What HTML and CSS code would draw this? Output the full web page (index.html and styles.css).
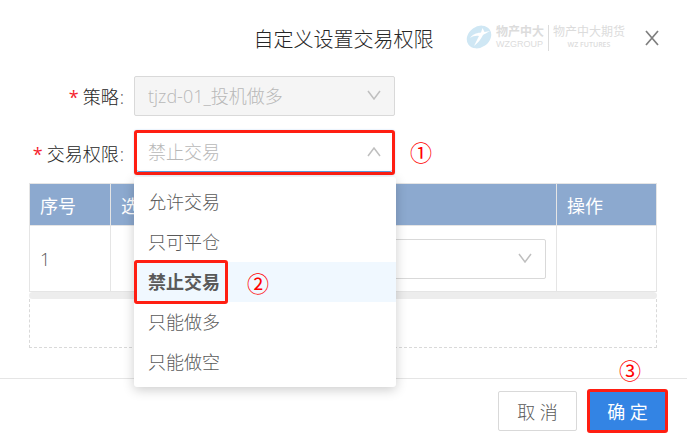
FILE: index.html
```
<!DOCTYPE html>
<html lang="zh-CN">
<head>
    <meta charset="UTF-8">
    <title>自定义设置交易权限</title>
    <link rel="stylesheet" href="styles.css">
</head>
<body>
<div class="modal">
    <!-- 标题 -->
    <div class="header">
        <h3>自定义设置交易权限</h3>
        <div class="header-right">
            <div class="logo">
                <svg width="26" height="26" viewBox="0 0 26 26">
                    <ellipse cx="13" cy="12" rx="13" ry="10.5" transform="rotate(-35 13 12)" fill="#cfe7f4"/>
                    <path d="M4 13C8 8 12 8 15 7.5L16.500 3L18.500 7L24 6C21 8 18 9 17 10C15 14 12 18 8 21C10 17 12 13 13 11C10 10.500 7 11 4 13Z" fill="#fff"/>
                </svg>
                <div class="group">
                    <b>物产中大</b>
                    <span>WZGROUP</span>
                </div>
                <div class="futures">
                    <b>物产中大期货</b>
                    <span>WZ FUTURES</span>
                </div>
            </div>
            <button type="button" class="close" aria-label="关闭">
                <svg width="14" height="16" viewBox="0 0 14 16">
                    <path d="M1 1L13 15M13 1L1 15" stroke="#7f7f7f" stroke-width="1.7" fill="none"/>
                </svg>
            </button>
        </div>
    </div>
    <!-- 表单 -->
    <form class="form">
        <div class="row">
            <label for="strategy"><i>*</i>策略<span>:</span></label>
            <div class="control">
                <select id="strategy" disabled>
                    <option>tjzd-01_投机做多</option>
                </select>
                <svg class="arrow" width="14" height="10" viewBox="0 0 14 10"><path d="M1 1L7 9L13 1"/></svg>
            </div>
        </div>
        <div class="row">
            <label for="auth"><i>*</i>交易权限<span>:</span></label>
            <div class="control marked">
                <select id="auth">
                    <option>禁止交易</option>
                </select>
                <svg class="arrow" width="14" height="10" viewBox="0 0 14 10"><path d="M1 9L7 1L13 9"/></svg>
                <span class="num num-1">①</span>
                <!-- 下拉菜单 -->
                <ul class="menu">
                    <li>允许交易</li>
                    <li>只可平仓</li>
                    <li class="active"><span class="box">禁止交易</span><span class="num num-2">②</span></li>
                    <li>只能做多</li>
                    <li>只能做空</li>
                </ul>
            </div>
        </div>
        <div class="list">
            <table>
                <colgroup>
                    <col class="col-no">
                    <col class="col-check">
                    <col>
                    <col class="col-do">
                </colgroup>
                <thead>
                <tr>
                    <th>序号</th>
                    <th>选</th>
                    <th></th>
                    <th>操作</th>
                </tr>
                </thead>
                <tbody>
                <tr>
                    <td>1</td>
                    <td></td>
                    <td>
                        <div class="control">
                            <select aria-label="选择"></select>
                            <svg class="arrow" width="14" height="10" viewBox="0 0 14 10"><path d="M1 1L7 9L13 1"/></svg>
                        </div>
                    </td>
                    <td></td>
                </tr>
                </tbody>
            </table>
            <div class="scroll"></div>
            <div class="add"></div>
        </div>
    </form>
    <!-- 按钮 -->
    <div class="footer">
        <button type="button" class="cancel">取 消</button>
        <button type="button" class="ok">确 定<span class="num num-3">③</span></button>
    </div>
</div>
</body>
</html>
```
FILE: styles.css
```
* {
    box-sizing: border-box;
}
body {
    margin: 0;
    background-color: #FFF;
    color: #595959;
    font-family: "Open Sans", "Noto Sans CJK SC", sans-serif;
    font-size: 18px;
    font-weight: 300;
}
.modal {
    margin-right: 3px;
}

/* 标题 */
.header {
    display: grid;
    grid-template-columns: 1fr auto 1fr;
    align-items: center;
    height: 76px;
    padding: 0 28px;
}
.header h3 {
    grid-column: 2;
    margin: 0;
    color: #262626;
    font-size: 20px;
    font-weight: 300;
}
.header-right {
    display: flex;
    justify-content: flex-end;
    align-items: center;
    gap: 20px;
}
.logo {
    display: flex;
    align-items: center;
    gap: 4px;
    color: #DCDCDC;
    white-space: nowrap;
}
.group,
.futures {
    display: flex;
    flex-direction: column;
    line-height: 13px;
}
.group b {
    font-size: 12px;
    font-weight: 700;
}
.group span {
    font-family: "Liberation Sans", sans-serif;
    font-size: 9px;
    font-weight: 400;
}
.futures {
    padding-left: 4px;
    border-left: 1px solid #DCDCDC;
    text-align: center;
}
.futures b {
    font-size: 12px;
    font-weight: 400;
}
.futures span {
    font-size: 7px;
    font-weight: 600;
}
.close {
    display: block;
    padding: 0;
    border: none;
    background: none;
}
.close svg {
    display: block;
}

/* 表单 */
.form {
    padding: 0 30px 30px 29px;
}
.row {
    display: flex;
    align-items: center;
    margin-bottom: 14px;
}
.row label {
    width: 105px;
    padding-right: 10px;
    color: #262626;
    text-align: right;
    white-space: nowrap;
}
.row label i {
    margin-right: 4px;
    color: #F5222D;
    font-style: normal;
    font-weight: 400;
}
.row label span {
    margin-left: 1px;
    color: #595959;
}
.control {
    position: relative;
}
.row .control {
    width: 261px;
}
.control select {
    display: block;
    width: 100%;
    height: 40px;
    padding: 0 13px;
    border: 1px solid #D9D9D9;
    border-radius: 2px;
    background-color: #FFF;
    color: #B8B8B8;
    font: inherit;
    appearance: none;
    opacity: 1;
}
.control select:disabled {
    background-color: #F5F5F5;
}
.arrow {
    position: absolute;
    top: 14px;
    right: 14px;
    fill: none;
    stroke: #BFBFBF;
    stroke-width: 1.5;
}
.row .marked {
    border: 3px solid #FF1E12;
    border-radius: 3px;
    box-shadow: 0 0 2px #BCD8F5;
}
.marked select {
    height: 39px;
    padding: 0 11px;
    border: none;
    border-bottom: 1px solid #5B9BDC;
}
.marked .arrow {
    right: 11px;
}

/* 序号 */
.num {
    position: absolute;
    color: #FF0000;
    font-family: "Noto Sans CJK SC", sans-serif;
    font-size: 22px;
    font-weight: 400;
    line-height: 24px;
}
.num-1 {
    top: 6px;
    left: 273px;
}
.num-2 {
    top: 8px;
    left: 113px;
}
.num-3 {
    top: -35px;
    left: 29px;
}

/* 下拉菜单 */
.menu {
    position: absolute;
    z-index: 1;
    top: 44px;
    left: -3px;
    width: 262px;
    margin: 0;
    padding: 5px 0;
    border-radius: 3px;
    background-color: #FFF;
    box-shadow: 0 3px 12px rgba(0, 0, 0, 0.2);
    list-style: none;
}
.menu li {
    position: relative;
    height: 40px;
    padding-left: 14px;
    line-height: 40px;
}
.menu .active {
    padding-left: 0;
    background-color: #F0F8FF;
    font-weight: 700;
}
.menu .box {
    position: absolute;
    top: -2px;
    left: 0;
    width: 94px;
    padding-left: 11px;
    border: 3px solid #FF1E12;
    border-radius: 3px;
    line-height: 38px;
}

/* 表格 */
.list {
    margin-top: -6px;
}
table {
    width: 100%;
    border-collapse: collapse;
    table-layout: fixed;
}
.col-no {
    width: 81px;
}
.col-check {
    width: 120px;
}
.col-do {
    width: 100px;
}
th,
td {
    padding: 0 10px;
    border: 1px solid #E5E5E5;
    text-align: left;
}
th {
    height: 42px;
    background-color: #8CA9CF;
    color: #FFF;
    font-weight: 400;
}
td {
    height: 66px;
}
.scroll {
    height: 7px;
    border-radius: 4px;
    background-color: #EDEDED;
}
.add {
    height: 49px;
    border: 1px dashed #D9D9D9;
    border-top: none;
}

/* 按钮 */
.footer {
    display: flex;
    justify-content: flex-end;
    align-items: center;
    gap: 10px;
    padding: 10px 19px;
    border-top: 1px solid #E5E5E5;
}
.footer button {
    position: relative;
    font: inherit;
    white-space: nowrap;
}
.cancel {
    width: 79px;
    height: 40px;
    border: 1px solid #D9D9D9;
    border-radius: 2px;
    background-color: #FFF;
    color: #595959;
}
.ok {
    width: 81px;
    height: 44px;
    border: 3px solid #FF1E12;
    border-radius: 3px;
    background-color: #3384E4;
    color: #FFF;
}
.footer .ok {
    font-weight: 400;
}
```
